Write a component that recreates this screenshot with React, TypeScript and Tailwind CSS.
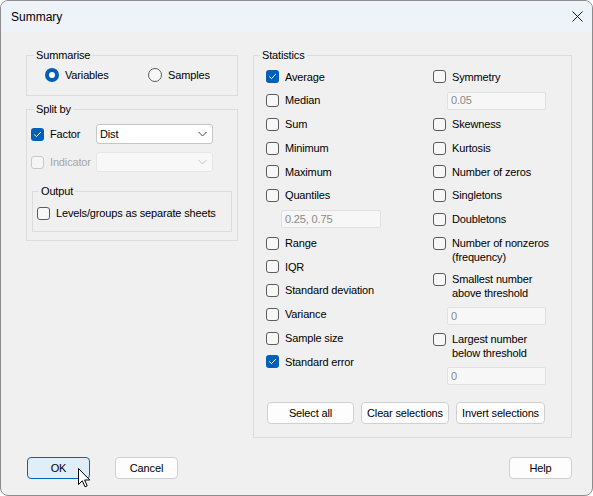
import React from 'react';

function CheckBox({ checked = false, disabled = false }: { checked?: boolean; disabled?: boolean }) {
  if (checked) {
    return (
      <span className="flex h-[13px] w-[13px] shrink-0 items-center justify-center rounded-[3px] bg-[#005fb8]">
        <svg width="9" height="9" viewBox="0 0 9 9" fill="none">
          <path d="M1.5 4.8 L3.5 6.6 L7.5 2.4" stroke="#ffffff" strokeWidth="1" strokeLinecap="round" strokeLinejoin="round" />
        </svg>
      </span>
    );
  }
  return (
    <span
      className={
        disabled
          ? 'block h-[13px] w-[13px] shrink-0 rounded-[3px] border border-[#c9c9c9] bg-[#f5f5f5]'
          : 'block h-[13px] w-[13px] shrink-0 rounded-[3px] border border-[#5c5c5c] bg-[#f7f7f7]'
      }
    />
  );
}

function Radio({ checked = false }: { checked?: boolean }) {
  if (checked) {
    return (
      <span className="flex h-[14px] w-[14px] shrink-0 items-center justify-center rounded-full bg-[#005fb8]">
        <span className="block h-[6px] w-[6px] rounded-full bg-white" />
      </span>
    );
  }
  return <span className="block h-[14px] w-[14px] shrink-0 rounded-full border border-[#5c5c5c] bg-[#f7f7f7]" />;
}

function Check({ label, checked }: { label: string; checked?: boolean }) {
  return (
    <div className="flex h-[23.75px] items-center gap-[6px]">
      <CheckBox checked={checked} />
      <span>{label}</span>
    </div>
  );
}

function TwoLineCheck({ lines, h, pt }: { lines: string[]; h: string; pt: string }) {
  return (
    <div className={`flex items-start gap-[6px] ${h} ${pt}`}>
      <span className="mt-[0.5px]">
        <CheckBox />
      </span>
      <span className="leading-[14px]">
        {lines[0]}
        <br />
        {lines[1]}
      </span>
    </div>
  );
}

function ValueBox({ value, className }: { value: string; className: string }) {
  return (
    <div className={`flex h-[18px] items-center rounded-[2px] border border-[#e0e0e0] bg-[#f7f7f7] pl-[3px] text-[#8a8a8a] ${className}`}>
      {value}
    </div>
  );
}

function Chevron({ color }: { color: string }) {
  return (
    <svg width="9" height="6" viewBox="0 0 9 6" fill="none">
      <path d="M0.5 1 L4.5 5 L8.5 1" stroke={color} strokeWidth="1" />
    </svg>
  );
}

function Button({ children, className }: { children: React.ReactNode; className: string }) {
  return (
    <div className={`flex h-[22px] items-center justify-center rounded-[4px] border border-[#d0d0d0] bg-[#fdfdfd] ${className}`}>
      {children}
    </div>
  );
}

export default function App() {
  return (
    <div className="h-[496px] w-[593px] bg-white font-['Liberation_Sans',Arial,sans-serif] text-[11px] tracking-[-0.15px] text-black">
      <div className="relative flex h-full flex-col overflow-hidden rounded-[8px] border border-[#8c8c8c] bg-[#f0f0f0]">
        {/* Title bar */}
        <div className="flex h-[31px] shrink-0 items-center justify-between bg-[#eef3fa] pl-[10px] pr-[9px]">
          <span className="text-[12px] tracking-normal">Summary</span>
          <svg width="11" height="11" viewBox="0 0 11 11" fill="none">
            <path d="M0.5 0.5 L10.5 10.5 M10.5 0.5 L0.5 10.5" stroke="#1a1a1a" strokeWidth="1" />
          </svg>
        </div>

        {/* Body */}
        <div className="flex gap-[15px] pl-[25px] pt-[15px]">
          {/* Left column */}
          <div className="flex w-[212px] flex-col">
            <fieldset className="border border-[#dcdcdc] pb-[12px]">
              <legend className="ml-[7px] px-[2px] leading-[16px]">Summarise</legend>
              <div className="mt-[4px] flex h-[16px] items-center pl-[18px]">
                <div className="flex w-[103px] items-center gap-[6px]">
                  <Radio checked />
                  <span>Variables</span>
                </div>
                <div className="flex items-center gap-[6px]">
                  <Radio />
                  <span>Samples</span>
                </div>
              </div>
            </fieldset>

            <fieldset className="mt-[5px] border border-[#dcdcdc] pb-[8px]">
              <legend className="ml-[7px] px-[2px] leading-[16px]">Split by</legend>
              <div className="mt-[7px] flex h-[20px] items-center pl-[4px]">
                <div className="flex w-[65px] items-center gap-[6px]">
                  <CheckBox checked />
                  <span>Factor</span>
                </div>
                <div className="flex h-[20px] w-[117px] items-center justify-between rounded-[3px] border border-[#c6c6c6] bg-white pl-[3px] pr-[5px]">
                  <span>Dist</span>
                  <Chevron color="#444444" />
                </div>
              </div>
              <div className="mt-[8px] flex h-[20px] items-center pl-[4px]">
                <div className="flex w-[65px] items-center gap-[6px] text-[#a6a6a6]">
                  <CheckBox disabled />
                  <span>Indicator</span>
                </div>
                <div className="flex h-[20px] w-[117px] items-center justify-end rounded-[3px] border border-[#e6e6e6] bg-[#f8f8f8] pr-[5px]">
                  <Chevron color="#c2c2c2" />
                </div>
              </div>
              <fieldset className="mx-[5px] mt-[11px] border border-[#dcdcdc] pb-[10px]">
                <legend className="ml-[6px] px-[2px] leading-[16px]">Output</legend>
                <div className="mt-[6px] flex h-[16px] items-center gap-[6px] pl-[4px]">
                  <CheckBox />
                  <span>Levels/groups as separate sheets</span>
                </div>
              </fieldset>
            </fieldset>
          </div>

          {/* Statistics */}
          <fieldset className="w-[319px] border border-[#dcdcdc] pb-[13px] pl-[12px]">
            <legend className="ml-[-6px] px-[2px] leading-[16px]">Statistics</legend>
            <div className="mt-[2px] flex">
              <div className="flex w-[167px] flex-col">
                <Check label="Average" checked />
                <Check label="Median" />
                <Check label="Sum" />
                <Check label="Minimum" />
                <Check label="Maximum" />
                <Check label="Quantiles" />
                <div className="flex h-[23.75px] items-center pl-[15px]">
                  <ValueBox value="0.25, 0.75" className="w-[100px]" />
                </div>
                <Check label="Range" />
                <Check label="IQR" />
                <Check label="Standard deviation" />
                <Check label="Variance" />
                <Check label="Sample size" />
                <Check label="Standard error" checked />
              </div>
              <div className="flex flex-col">
                <Check label="Symmetry" />
                <div className="flex h-[23.75px] items-center pl-[14px]">
                  <ValueBox value="0.05" className="w-[99px]" />
                </div>
                <Check label="Skewness" />
                <Check label="Kurtosis" />
                <Check label="Number of zeros" />
                <Check label="Singletons" />
                <Check label="Doubletons" />
                <TwoLineCheck lines={['Number of nonzeros', '(frequency)']} h="h-[36px]" pt="pt-[5px]" />
                <TwoLineCheck lines={['Smallest number', 'above threshold']} h="h-[37px]" pt="pt-[5px]" />
                <div className="flex h-[24px] items-center pl-[14px]">
                  <ValueBox value="0" className="w-[99px]" />
                </div>
                <TwoLineCheck lines={['Largest number', 'below threshold']} h="h-[36px]" pt="pt-[4px]" />
                <div className="flex h-[24px] items-center pl-[14px]">
                  <ValueBox value="0" className="w-[99px]" />
                </div>
              </div>
            </div>
            <div className="ml-[1px] mt-[14px] flex gap-[7px]">
              <Button className="w-[87px]">Select all</Button>
              <Button className="w-[88px]">Clear selections</Button>
              <Button className="w-[89px]">Invert selections</Button>
            </div>
          </fieldset>
        </div>

        {/* Footer */}
        <div className="mt-[19px] flex items-center pl-[26px] pr-[20px]">
          <div className="flex h-[22px] w-[63px] items-center justify-center rounded-[4px] border border-[#0067c0] bg-[#e0eef9]">
            OK
          </div>
          <Button className="ml-[25px] w-[63px]">Cancel</Button>
          <Button className="ml-auto w-[63px]">Help</Button>
        </div>

        {/* Mouse pointer */}
        <svg className="absolute left-[77px] top-[467px]" width="13" height="20" viewBox="0 0 13 20" fill="none">
          <path d="M0.5 0.5 L0.5 16.5 L4.3 12.8 L7 18.8 L9.2 17.8 L6.6 12 L11.8 12 Z" fill="#ffffff" stroke="#000000" strokeWidth="1" strokeLinejoin="round" />
        </svg>
      </div>
    </div>
  );
}
